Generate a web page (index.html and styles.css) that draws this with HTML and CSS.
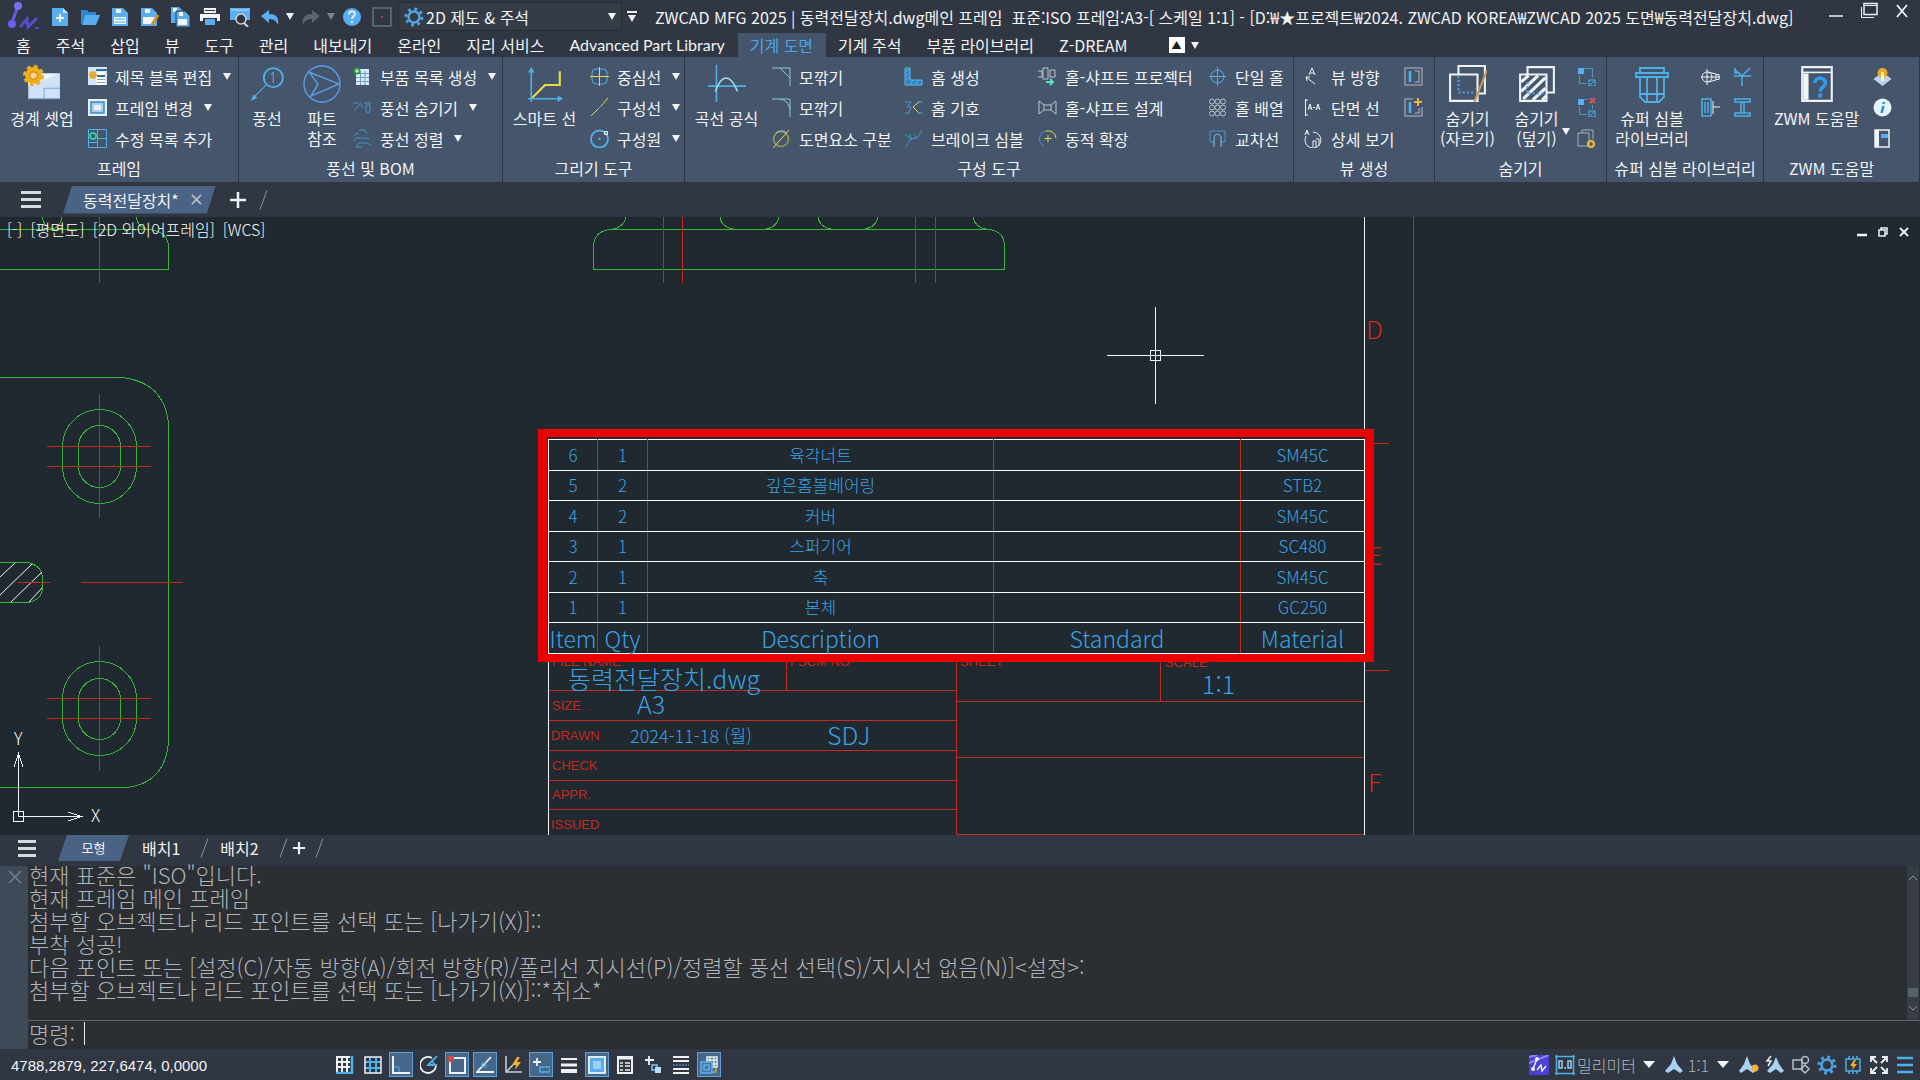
FILE: index.html
```html
<!DOCTYPE html>
<html lang="ko">
<head>
<meta charset="utf-8">
<title>ZWCAD MFG 2025</title>
<link rel="stylesheet" href="styles.css">
</head>
<body>
<div class="app">
<header class="titlebar">
  <svg class="logo" viewBox="0 0 32 30"><path d="M10 4 3 23" stroke="#6a5be6" stroke-width="3"/><circle cx="10" cy="4" r="4" fill="#7a6cf5"/><circle cx="4" cy="22" r="4" fill="#6d5cf0"/><path d="m12 25 7-8 1 8 9-9" stroke="#5a4cd0" stroke-width="3"/><path d="M27 26h4" stroke="#5a4cd0" stroke-width="2"/></svg>
  <div class="quick">
    <button aria-label="새로 만들기"><svg viewBox="0 0 20 20"><path class="fb" d="M2 1h11l5 5v13H2z"/><path fill="#bfe0fa" d="M13 1v5h5z"/><path class="w" stroke-width="2" d="M10 7v8M6 11h8"/></svg></button>
    <button aria-label="열기"><svg viewBox="0 0 20 20"><path fill="#2f86cc" d="M1 3h6l2 2h7v4H5L2 17H1z"/><path class="fb" d="M5 8h15l-4 10H2z"/></svg></button>
    <button aria-label="저장"><svg viewBox="0 0 20 20"><path class="fb" d="M2 1h11l5 5v13H2z"/><path class="fw" d="M4 10h12v7H4zM6 2h5v4H6z"/><path class="b" d="M5 12h10M5 15h10"/></svg></button>
    <button aria-label="다른 이름으로 저장"><svg viewBox="0 0 20 20"><path class="fb" d="M1 1h11l5 5v13H1z"/><path class="fw" d="M3 10h12v7H3zM5 2h5v4H5z"/><path stroke="#c98d2b" stroke-width="3" d="m18 8-6 10"/></svg></button>
    <button aria-label="모두 저장"><svg viewBox="0 0 20 20"><path class="fb" d="M1 0h8l4 4v12H1z"/><path class="fw" d="M3 1h4v4H3z"/><path fill="#58aef0" stroke="#30363f" d="M6 4h9l5 5v11H6z"/><path class="fw" d="M8 12h9v6H8zM9 5h4v4H9z"/></svg></button>
    <button aria-label="인쇄"><svg viewBox="0 0 20 20"><path class="fw" d="M4 1h12v5H4zM0 7h20v7h-3v-3H3v3H0z"/><path class="fb" d="M5 12h10v6H5z"/><path stroke="#30363f" d="M5 3.500h10"/></svg></button>
    <button aria-label="미리보기"><svg viewBox="0 0 20 20"><path class="fb" d="M0 1h20v12H0z"/><path stroke="#bfe0fa" d="M1 3h18"/><circle cx="11" cy="12" r="5" fill="#30363f" stroke="#cdd3d8" stroke-width="1.500"/><path stroke="#cdd3d8" stroke-width="2" d="m14 16 4 4"/></svg></button>
    <button aria-label="실행 취소"><svg viewBox="0 0 20 20"><path class="fb" d="M1 9 9 3v4c7 0 10 3 9 11-2-4-4-6-9-6v4z"/></svg></button>
    <button class="drop" aria-label="실행 취소 목록"><i class="caret"></i></button>
    <button aria-label="다시 실행"><svg viewBox="0 0 20 20"><path fill="#5d646c" d="m19 9-8-6v4C4 7 1 10 2 18c2-4 4-6 9-6v4z"/></svg></button>
    <button class="drop" aria-label="다시 실행 목록"><i class="caret dim"></i></button>
    <button aria-label="도움말"><svg viewBox="0 0 20 20"><circle class="fb" cx="10" cy="10" r="9"/><path class="w" stroke-width="1.800" d="M7 7.500c0-4 6-4 6-.5 0 2-3 2-3 5M10 14v2"/></svg></button>
    <button aria-label="터치"><svg viewBox="0 0 20 20"><path stroke="#6a7077" stroke-width="1.500" d="M1 1h18v18H1z"/><circle cx="10" cy="10" r="1" fill="#c0504d"/></svg></button>
  </div>
  <label class="workspace">
    <svg viewBox="0 0 20 20"><circle cx="10" cy="10" r="5.500" stroke="#4fa3e3" stroke-width="2.500"/><circle cx="10" cy="10" r="8" stroke="#4fa3e3" stroke-width="3" stroke-dasharray="2.800 3.480"/></svg>
    <select aria-label="작업공간"><option>2D 제도 &amp; 주석</option></select>
    <i class="caret"></i>
  </label>
  <button class="custom" aria-label="사용자화"><i class="bar"></i><i class="caret"></i></button>
  <h1>ZWCAD MFG 2025 | 동력전달장치.dwg메인 프레임&nbsp; 표준:ISO 프레임:A3-[ 스케일 1:1] - [D:₩★프로젝트₩2024. ZWCAD KOREA₩ZWCAD 2025 도면₩동력전달장치.dwg]</h1>
  <div class="winctl">
    <button aria-label="최소화"><svg viewBox="0 0 18 18"><path class="w" stroke-width="1.500" d="M2 14h14"/></svg></button>
    <button aria-label="최대화"><svg viewBox="0 0 18 18"><path class="w" stroke-width="1.500" d="M4 1.500h13v11H4z"/><path class="w" d="M4 3.500h13M1.500 5v10.500H14"/></svg></button>
    <button aria-label="닫기"><svg viewBox="0 0 18 18"><path class="w" stroke-width="1.800" d="m4 3 10 12M14 3 4 15"/></svg></button>
  </div>
</header>
<nav class="menu">
  <a href="#">홈</a><a href="#">주석</a><a href="#">삽입</a><a href="#">뷰</a><a href="#">도구</a><a href="#">관리</a><a href="#">내보내기</a><a href="#">온라인</a><a href="#">지리 서비스</a><a href="#" class="latin">Advanced Part Library</a><a href="#" class="on" aria-current="page">기계 도면</a><a href="#">기계 주석</a><a href="#">부품 라이브러리</a><a href="#">Z-DREAM</a>
  <button class="fold" aria-label="리본 최소화"><span>▲</span><i class="caret"></i></button>
</nav>
<section class="ribbon">
  <section class="panel p1">
    <div class="tools">
      <button class="big"><svg viewBox="0 0 36 36"><path fill="#cfe2fa" d="M5 8h30v24H5z"/><path fill="#eef5ff" d="M5 20 35 8H5z"/><path stroke="#7fa6d8" d="M35 22H20v10M5 32h30"/><circle cx="10" cy="10" r="8" fill="#f2ae1c"/><circle cx="10" cy="10" r="8.500" stroke="#f2ae1c" stroke-width="3" stroke-dasharray="3.500 3.180"/><circle cx="10" cy="10" r="3.500" fill="#f8d98a" stroke="#c8811a"/></svg><span>경계 셋업</span></button>
      <div class="rows">
        <button><svg viewBox="0 0 19 19"><path fill="#d3e7f7" d="M0 0h19v18H0z"/><path fill="#fff" d="M8 5h9v13H8z"/><path stroke="#2d6da8" stroke-width="2" d="M8 3h11M9 9h8"/><path stroke="#7ba3c4" d="M9 12.500h8M9 15.500h8"/><path stroke="#eba92a" stroke-width="2" d="M5 4v8M1 8h8M2 5l6 6M8 5l-6 6"/></svg><span>제목 블록 편집</span><i class="caret"></i></button>
        <button><svg viewBox="0 0 19 19"><path fill="#e6f3fb" d="M0 1h19v17H0z"/><path fill="#a9d2f1" stroke="#3c87c5" stroke-width="1.500" d="M3 4h13v11H3z"/><path fill="#e6f3fb" d="M6 7h7v5H6z"/></svg><span>프레임 변경</span><i class="caret"></i></button>
        <button><svg viewBox="0 0 19 19"><path class="b" d="M.5.500h18v18H.5zM9.500 1v18M10 9.500h9M1 13.500h8"/><circle cx="5" cy="7" r="3" stroke="#35c5a2" stroke-width="2"/></svg><span>수정 목록 추가</span></button>
      </div>
    </div>
    <h2>프레임</h2>
  </section>
  <section class="panel p2">
    <div class="tools">
      <button class="big"><svg viewBox="0 0 36 36"><circle class="b" cx="24" cy="12" r="9" stroke-width="1.800"/><path class="b" d="m22 9 2-2v10M17 19 4 32"/><path fill="#4fb0e8" d="m3 34 6-3-4-3z"/></svg><span>풍선</span></button>
      <button class="big"><svg viewBox="0 0 38 38"><circle cx="19" cy="19" r="18" stroke="#5a9be0" stroke-width="1.500"/><path stroke="#5a9be0" stroke-width="1.500" d="m6 7 30 12L8 31l7-12z"/></svg><span>파트<br>참조</span></button>
      <div class="rows">
        <button><svg viewBox="0 0 19 19"><path fill="#dceaf5" d="M3 2h13v16H3z"/><path stroke="#6f9fc9" d="M3 6.500h13M3 10.500h13M3 14.500h13M7.500 4v14M12 4v14"/><circle cx="4" cy="4" r="3.500" fill="#2c9a3c"/><path class="w" d="M4 2v4M2 4h4"/></svg><span>부품 목록 생성</span><i class="caret"></i></button>
        <button><svg viewBox="0 0 19 19"><path class="b dimi" d="M0 5h5M1 13l6-7M7 5l3 5M11 5h7M13 7h4v6l-2 2-2-2z"/></svg><span>풍선 숨기기</span><i class="caret"></i></button>
        <button><svg viewBox="0 0 19 19"><path class="b dimi" d="M6 1h6l2 4M1 6l5-2M3 9h9l4 1M3 9l-2 3M6 14h8l4 2M6 14l-3 4h6"/></svg><span>풍선 정렬</span><i class="caret"></i></button>
      </div>
    </div>
    <h2>풍선 및 BOM</h2>
  </section>
  <section class="panel p3">
    <div class="tools">
      <button class="big"><svg viewBox="0 0 36 36"><path class="b" stroke-width="1.500" d="M5 35V4M2 32h31"/><path class="fc" d="m5 2-3 5h6zM35 32l-5-3v6z"/><path class="y" stroke-width="2" d="M6 31 18 19h14V6"/></svg><span>스마트 선</span></button>
      <div class="rows">
        <button><svg viewBox="0 0 19 19"><rect class="b" x="2" y="2" width="15" height="15" rx="4"/><path class="y" d="M9.500 0v19M0 9.500h19"/></svg><span>중심선</span><i class="caret"></i></button>
        <button><svg viewBox="0 0 19 19"><path class="y" d="M1 18 8 11M11 8l7-8"/><path class="b" d="m8 11 3-3"/></svg><span>구성선</span><i class="caret"></i></button>
        <button><svg viewBox="0 0 19 19"><circle class="b" cx="9.500" cy="10" r="8.500" stroke-width="1.800"/><circle class="fc" cx="9.500" cy="10" r="1.200"/><path class="w" d="M14.500 2.500h3v3h-3z"/></svg><span>구성원</span><i class="caret"></i></button>
      </div>
    </div>
    <h2>그리기 도구</h2>
  </section>
  <section class="panel p4">
    <div class="tools">
      <button class="big"><svg viewBox="0 0 36 36"><path class="b" stroke-width="1.500" d="M8 0v35M0 20h36"/><path stroke="#9fe0e8" stroke-width="1.500" d="M7 25C13 8 21 8 28 25"/></svg><span>곡선 공식</span></button>
      <div class="rows">
        <button><svg viewBox="0 0 19 19"><path class="c" d="M0 1h18v18M8 1l10 10"/></svg><span>모깎기</span></button>
        <button><svg viewBox="0 0 19 19"><path class="c" d="M0 1h18v18M8 1q8 1 10 10"/></svg><span>모깎기</span></button>
        <button><svg viewBox="0 0 19 19"><circle cx="9" cy="10" r="7.500" stroke="#9aa04e" stroke-width="1.500"/><path class="c" d="M4 4a8 8 0 0 1 11 0"/><path class="y" d="M1 19 17 1"/></svg><span>도면요소 구분</span></button>
      </div>
      <div class="rows">
        <button><svg viewBox="0 0 19 19"><path fill="#3483bd" stroke="#5cb8ee" d="M1 1h5v12h12v5H1z"/><path class="b" d="m1 5 5-3M1 9l5-3M1 13l5-3M6 18l3-5M11 18l3-5"/></svg><span>홈 생성</span></button>
        <button><svg viewBox="0 0 19 19"><path class="b dimi" d="M1 4h6L3 9h4l-2 6H1"/><path class="y" d="m15 4-6 5 6 6"/><path class="b" d="M14 4h4M14 15h4"/></svg><span>홈 기호</span></button>
        <button><svg viewBox="0 0 19 19"><path class="b dimi" d="m1 5 6 5 6-1 5-8M6 5l1 5-5 8M13 9l-3-3"/></svg><span>브레이크 심볼</span></button>
      </div>
      <div class="rows">
        <button><svg viewBox="0 0 19 19"><path class="w dimi" d="M0 4h4v6H0M5 1h5v11H5zM12 3h5v7h-5z"/><path stroke="#5ce0bd" stroke-width="2" d="M8 15h7M12 12l3 3-3 3"/></svg><span>홀-샤프트 프로젝터</span></button>
        <button><svg viewBox="0 0 19 19"><path class="w dimi" d="M1 3v13M18 3v13M1 3l5 4h7l5-4M1 16l5-4h7l5 4M6 7v5M13 7v5"/></svg><span>홀-샤프트 설계</span></button>
        <button><svg viewBox="0 0 19 19"><path class="b dimi" d="M6 17a8 8 0 0 1 2-15"/><path class="y" d="M8 2a8 8 0 0 1 10 7M10 6v7M6.500 9.500h7"/></svg><span>동적 확장</span></button>
      </div>
      <div class="rows">
        <button><svg viewBox="0 0 19 19"><circle class="b" cx="9.500" cy="9.500" r="6.500"/><path class="b" d="M9.500 0v19M1 9.500h17"/></svg><span>단일 홀</span></button>
        <button><svg viewBox="0 0 19 19"><g class="w dimi"><circle cx="4" cy="3.500" r="2.500"/><circle cx="9.500" cy="3.500" r="2.500"/><circle cx="15" cy="3.500" r="2.500"/><circle cx="4" cy="9.500" r="2.500"/><circle cx="9.500" cy="9.500" r="2.500"/><circle cx="15" cy="9.500" r="2.500"/><circle cx="4" cy="15.500" r="2.500"/><circle cx="9.500" cy="15.500" r="2.500"/><circle cx="15" cy="15.500" r="2.500"/></g></svg><span>홀 배열</span></button>
        <button><svg viewBox="0 0 19 19"><path class="b dimi" d="M6 13H2V2h15v11h-4"/><path class="c" d="M6 18V9c0-5 7-5 7 0v9"/></svg><span>교차선</span></button>
      </div>
    </div>
    <h2>구성 도구</h2>
  </section>
  <section class="panel p5">
    <div class="tools">
      <div class="rows">
        <button><svg viewBox="0 0 19 19"><path class="w" d="m5 8 3-7 3 7M6 6h4M2 10l9 7M2 10l4 0M2 10l1 4"/></svg><span>뷰 방향</span></button>
        <button><svg viewBox="0 0 19 19"><path class="w" d="M1.500 1v17M1 2h3M1 17h3M4 12l2-6 2 6M4.500 10h3M12 12l2-6 2 6M12.500 10h3M9 9.500h2"/></svg><span>단면 선</span></button>
        <button><svg viewBox="0 0 19 19"><path class="w" d="M9 3a8 8 0 1 1-7 4M1 6l2-5 2 5M2 4h2M9 18v-6h3v6M12 10h3v7"/></svg><span>상세 보기</span></button>
      </div>
      <div class="rows">
        <button aria-label="뷰 상자"><svg viewBox="0 0 19 19"><path stroke="#8f99a5" stroke-width="1.500" d="M1 1h17v17H1zM11 4h4v11h-4"/><path class="b" stroke-width="2.500" d="M6 4v11"/></svg></button>
        <button aria-label="뷰 추가"><svg viewBox="0 0 19 19"><path stroke="#8f99a5" stroke-width="1.500" d="M9 1H1v17h17V9M11 15h4v-5"/><path class="b" stroke-width="2.500" d="M6 4v11"/><path stroke="#f2b13c" stroke-width="2" d="M14 0v8M10 4h8"/></svg></button>
      </div>
    </div>
    <h2>뷰 생성</h2>
  </section>
  <section class="panel p6">
    <div class="tools">
      <button class="big"><svg viewBox="0 0 36 36"><path class="w" stroke-width="2" d="M9 8V1h25v26h-7M1 9h26v25H1z"/><path stroke="#4fa3e3" stroke-width="2" stroke-dasharray="2 2" d="M9 10v16h16"/><path stroke="#c79a52" stroke-width="2" d="M36 5 24 35"/></svg><span>숨기기<br>(자르기)</span></button>
      <button class="big"><svg viewBox="0 0 36 36"><path class="w" stroke-width="2" d="M9 8V2h25v24h-7M2 9h25v25H2z"/><path class="w" stroke-width="3" d="m3 16 7-6M3 25l16-15M5 32 26 12M14 33l12-11M23 33l4-4"/><path stroke="#4fa3e3" stroke-width="2" stroke-dasharray="2 2" d="M9 16v11h17"/></svg><span>숨기기<br>(덮기)</span><i class="caret"></i></button>
      <div class="rows">
        <button aria-label="숨김 편집"><svg viewBox="0 0 19 19"><path class="fb" d="M1 1h6v6H1z"/><path class="b dimi" d="M7 1.500h8.500V11M2.500 8v8.500H10"/><path class="b" d="M12 13h6v6h-6zM12 19l6-6"/></svg></button>
        <button aria-label="숨김 삭제"><svg viewBox="0 0 19 19"><path class="fb" d="M1 1h6v6H1z"/><path class="b dimi" d="M7 1.500h4M15.500 7v4M2.500 8v8.500H10"/><path class="b" d="M12 13h6v6h-6zM12 19l6-6"/><path stroke="#d8555c" stroke-width="2" d="m13 0 5 5M18 0l-5 5"/></svg></button>
        <button aria-label="숨김 설정"><svg viewBox="0 0 19 19"><path stroke="#a6b0bb" d="M5 4V1h11v9M1 4h11v13H1z"/><circle cx="14" cy="15" r="3" stroke="#e5ac3f" stroke-width="2.500"/></svg></button>
      </div>
    </div>
    <h2>숨기기</h2>
  </section>
  <section class="panel p7">
    <div class="tools">
      <button class="big"><svg viewBox="0 0 36 38"><path class="b" stroke-width="1.800" d="M6 3h24v5H6zM2 8h32v4H2zM6 12v20l5 5h14l5-5V12M6 29h24M13 12v25M23 12v25"/></svg><span>슈퍼 심볼<br>라이브러리</span></button>
      <div class="rows">
        <button aria-label="볼트"><svg viewBox="0 0 19 19"><circle class="w" cx="6" cy="10" r="5"/><path class="w" d="m7 5 8 2v6l-8 2M15 7.500h3v5h-3M0 10h19"/><path class="w" d="M6 2v16"/></svg></button>
        <button aria-label="단면"><svg viewBox="0 0 19 19"><path class="b" stroke-width="1.500" d="M1 1h9v17H1zM4 4v11M7 4v11"/><path class="w" d="M12 3v13M12 9h7"/></svg></button>
      </div>
      <div class="rows">
        <button aria-label="용접"><svg viewBox="0 0 19 19"><path class="b" stroke-width="1.500" d="M9 19V9M9 9 1 2M9 9l8-8M1 9h17M2 1v5h5"/></svg></button>
        <button aria-label="형강"><svg viewBox="0 0 19 19"><path class="b" stroke-width="1.500" d="M2 1h15v3H2zM2 15h15v3H2zM8 4v11M11 4v11"/></svg></button>
      </div>
    </div>
    <h2>슈퍼 심볼 라이브러리</h2>
  </section>
  <section class="panel p8">
    <div class="tools">
      <button class="big"><svg viewBox="0 0 36 36"><path class="w" stroke-width="2" d="M4 2h28v32H4z"/><path class="w" stroke-width="1.500" d="M4 7h28"/><path class="fw" d="M5 8h5v25H5z"/><path stroke="#2f9de8" stroke-width="3.500" d="M16 17c0-6 10-6 10 0 0 4-5 4-5 8M21 27v4"/></svg><span>ZWM 도움말</span></button>
      <div class="rows">
        <button aria-label="팁"><svg viewBox="0 0 19 19"><path fill="#b9d6ee" d="m9.500 5 9 7-9 7-9-7z"/><circle cx="9.500" cy="6" r="5" fill="#f3a928"/><path fill="#fff3cf" d="M8 5h3v9H8z"/></svg></button>
        <button aria-label="정보"><svg viewBox="0 0 19 19"><circle cx="9.500" cy="9.500" r="9" fill="#e8f4fc"/><path stroke="#2b8fd0" stroke-width="2.500" d="m10.500 8-2 7M11 4l-.5 2"/></svg></button>
        <button aria-label="문서"><svg viewBox="0 0 19 19"><path class="w" stroke-width="1.500" d="M2 1h14v17H2z"/><path class="fw" d="M2 1h4v17H2z"/><path class="fb" d="M8 5h7v4H8z"/></svg></button>
      </div>
    </div>
    <h2>ZWM 도움말</h2>
  </section>
</section>
<nav class="doctabs">
  <button class="burger" aria-label="문서 목록"><i></i><i></i><i></i></button>
  <div class="doctab"><a href="#">동력전달장치*</a><button aria-label="탭 닫기"><svg viewBox="0 0 12 12"><path stroke="#b5bcc4" stroke-width="2" d="m1 1 10 10M11 1 1 11"/></svg></button></div>
  <button class="plus" aria-label="새 문서"><svg viewBox="0 0 16 16"><path class="w" stroke-width="2.500" d="M8 0v16M0 8h16"/></svg></button>
  <i class="slash"></i>
</nav>
<main class="canvas">
  <svg class="drawing" aria-label="도면">
    <g transform="translate(0 -217)">
      <g class="green">
        <path d="M0 229.500H145Q168.500 229.500 168.500 248V269.500H0M42 217q2 10 10 12 9-2 10-12M136 217q2 11 13 13"/>
        <path d="M593.500 269.500V246q1-15 17-16.500H988q16 1 16.500 16.500v23.500zM611 229.500q13-2 15-12.500M720 217q2 12 18 12.500h24q15-1 17-12.500M818 217q2 12 18 12.500h25q15-1 17-12.500M973 217q2 11 15 12.500"/>
        <path d="M0 377.500H122Q164 382 168.500 423V742Q165 783 127 787.500H0"/>
        <rect x="62.500" y="409.500" width="74" height="94" rx="37"/><rect x="78.500" y="425.500" width="42" height="62" rx="21"/>
        <rect x="62.500" y="661.500" width="74" height="94" rx="37"/><rect x="78.500" y="678.500" width="42" height="61" rx="21"/>
        <path d="M0 562.500H28Q42 566 42.500 578V588Q42 600 28 602.500H0"/>
      </g>
      <path class="white smooth" d="m0 577 15-14M0 595l32-31M11 602l31-30M29 602l13-14"/>
      <path class="red" d="M99.500 217v66M663.500 217v66M682.500 217v66M915.500 217v66M935.500 217v66M99.500 394v124M47 446.500h104M47 466.500h104M99.500 646v125M47 698.500h104M47 718.500h104M18 582.500h32M81 582.500h102"/>
      <path class="red" d="M1413.500 217v618M1374 443.500h15M1365 670.500h24M548 690.500h408M548 720.500h408M548 750.500h408M548 780.500h408M548 809.500h408M786.500 653v37M956.500 653v181.500H1364M956 701.500h408M956 757.500h408M1160.500 653v48"/>
      <path class="white" d="M548.500 653v182M1364.500 217v618"/>
      <path class="white" d="M1155.500 307v97M1107 355.500h97M1150.500 350.500h10v10h-10z"/>
      <path class="white" d="M13.500 811.500h10v10h-10zM18.500 816.500V755M18.500 816.500H80M14 767l4.500-13 4.500 13M68 812l13 4.500-13 4.500"/>
      <g class="ucs"><text x="14" y="745">Y</text><text x="91" y="822">X</text></g>
      <g class="zone"><text x="1366" y="339">D</text><text x="1368" y="565">E</text><text x="1368" y="792">F</text></g>
      <g class="caption"><text x="552" y="666">FILE NAME</text><text x="790" y="666">FSCM NO</text><text x="960" y="666">SHEET</text><text x="1165" y="667">SCALE</text><text x="552" y="710">SIZE</text><text x="551" y="740">DRAWN</text><text x="552" y="770">CHECK</text><text x="552" y="799">APPR.</text><text x="551" y="829">ISSUED</text></g>
      <g class="value"><text x="568" y="689">동력전달장치.dwg</text><text x="637" y="714">A3</text><text class="date" x="630" y="743">2024-11-18 (월)</text><text x="827" y="745">SDJ</text><text x="1202" y="694">1:1</text></g>
    </g>
  </svg>
  <div class="viewlabel"><button>[-]</button> <button>[평면도]</button> <button>[2D 와이어프레임]</button> <button>[WCS]</button></div>
  <div class="viewctl">
    <button aria-label="최소화"><svg viewBox="0 0 10 10"><path class="w" stroke-width="2.500" d="M0 8h10"/></svg></button>
    <button aria-label="이전 크기"><svg viewBox="0 0 10 10"><path class="w" stroke-width="1.500" d="M3 3V1h6v6H7M1 3h6v6H1z"/></svg></button>
    <button aria-label="닫기"><svg viewBox="0 0 10 10"><path class="w" stroke-width="2" d="m1 1 8 8M9 1 1 9"/></svg></button>
  </div>
  <div class="highlight">
    <table class="bom">
      <colgroup><col class="c-item"><col class="c-qty"><col class="c-desc"><col class="c-std"><col class="c-mat"></colgroup>
      <tbody>
        <tr><td>6</td><td>1</td><td>육각너트</td><td></td><td>SM45C</td></tr>
        <tr><td>5</td><td>2</td><td>깊은홈볼베어링</td><td></td><td>STB2</td></tr>
        <tr><td>4</td><td>2</td><td>커버</td><td></td><td>SM45C</td></tr>
        <tr><td>3</td><td>1</td><td>스퍼기어</td><td></td><td>SC480</td></tr>
        <tr><td>2</td><td>1</td><td>축</td><td></td><td>SM45C</td></tr>
        <tr><td>1</td><td>1</td><td>본체</td><td></td><td>GC250</td></tr>
      </tbody>
      <tfoot><tr><th scope="col">Item</th><th scope="col">Qty</th><th scope="col">Description</th><th scope="col">Standard</th><th scope="col">Material</th></tr></tfoot>
    </table>
  </div>
</main>
<nav class="layouts">
  <button class="burger" aria-label="배치 목록"><i></i><i></i><i></i></button>
  <a href="#" class="on" aria-current="page">모형</a>
  <a href="#">배치1</a><i class="slash"></i>
  <a href="#">배치2</a><i class="slash"></i>
  <button class="plus" aria-label="새 배치"><svg viewBox="0 0 16 16"><path class="w" stroke-width="2.500" d="M8 1v14M1 8h14"/></svg></button><i class="slash"></i>
</nav>
<section class="command">
  <div class="grip"><button aria-label="명령창 닫기"><svg viewBox="0 0 14 14"><path stroke="#77818b" stroke-width="1.500" d="m1 1 12 12M13 1 1 13"/></svg></button></div>
  <div class="cmdbody">
    <div class="history">
      <div class="log">
        <p>현재 표준은 "ISO"입니다.</p>
        <p>현재 프레임 메인 프레임</p>
        <p>첨부할 오브젝트나 리드 포인트를 선택 또는 [나가기(X)]::</p>
        <p>부착 성공!</p>
        <p>다음 포인트 또는 [설정(C)/자동 방향(A)/회전 방향(R)/폴리선 지시선(P)/정렬할 풍선 선택(S)/지시선 없음(N)]&lt;설정&gt;:</p>
        <p>첨부할 오브젝트나 리드 포인트를 선택 또는 [나가기(X)]::*취소*</p>
      </div>
      <div class="scroll"><svg viewBox="0 0 10 6"><path d="m1 5 4-4 4 4"/></svg><i></i><svg viewBox="0 0 10 6"><path d="m1 1 4 4 4-4"/></svg></div>
    </div>
    <div class="prompt"><label for="cmd">명령:</label><input id="cmd" type="text"></div>
  </div>
</section>
<footer class="status">
  <output class="coords">4788,2879, 227,6474, 0,0000</output>
  <div class="toggles">
    <button aria-label="그리드"><svg viewBox="0 0 18 18"><path class="w" stroke-width="2" d="M0 1h14M0 6h14M0 11h14M1 0v16M6 0v16M11 0v16"/><path class="b" stroke-width="2.500" d="M16 0v17H0"/></svg></button>
    <button aria-label="스냅"><svg viewBox="0 0 18 18"><path class="b" stroke-width="2" d="M1 6h16M1 12h16M6 1v16M12 1v16"/><path class="w" stroke-width="1.500" d="M1 1h16v16H1z"/></svg></button>
    <button class="set" aria-label="직교"><svg viewBox="0 0 18 18"><path class="w" stroke-width="2" d="M1 0v17h17"/><path class="b" d="M2 11h5v5"/></svg></button>
    <button aria-label="극좌표"><svg viewBox="0 0 18 18"><path class="w" stroke-width="1.800" d="M12 2a8 8 0 1 0 4 8"/><path class="b" stroke-width="1.800" d="m17 0-9 9h9M12 5l3 4"/></svg></button>
    <button class="set" aria-label="객체 스냅"><svg viewBox="0 0 18 18"><path class="w" stroke-width="2" d="M2 2h15v15H2z"/><path fill="#c0504d" d="M0 0h6v6H0z"/></svg></button>
    <button class="set" aria-label="객체 추적"><svg viewBox="0 0 18 18"><path class="w" stroke-width="1.800" d="M15 1 1 16h17"/><path class="b" d="M6 7h4v4H6z"/></svg></button>
    <button aria-label="동적 UCS"><svg viewBox="0 0 18 18"><path stroke="#cbd0d5" stroke-width="1.500" d="M2 0v16h16M2 16 9 9"/><path fill="#f0b030" d="M13 1 8 9h4l-1 5 6-8h-4l3-5z"/></svg></button>
    <button class="set" aria-label="동적 입력"><svg viewBox="0 0 18 18"><path class="w" stroke-width="1.800" d="M5 2v8M1 6h8"/><path class="b" stroke-width="1.500" d="M8 11h10v5H8z"/></svg></button>
    <button aria-label="선가중치"><svg viewBox="0 0 18 18"><path class="w" stroke-width="2" d="M1 3h16"/><path class="w" stroke-width="3" d="M1 9h16"/><path class="w" stroke-width="4" d="M1 15h16"/></svg></button>
    <button class="set" aria-label="투명도"><svg viewBox="0 0 18 18"><path fill="#5aacec" stroke="#dcecf8" stroke-width="2" d="M1 1h16v16H1z"/><path fill="#9dd0f7" d="M5 5h8v8H5z"/></svg></button>
    <button aria-label="빠른 특성"><svg viewBox="0 0 18 18"><path class="w" stroke-width="2" d="M2 1h14v16H2z"/><path class="w" stroke-width="3" d="M2 2h14"/><path class="w" stroke-width="1.500" d="M4 7h3M9 7h5M4 10h3M9 10h5M4 14h3M9 14h5"/></svg></button>
    <button aria-label="선택 순환"><svg viewBox="0 0 18 18"><path class="w" stroke-width="1.800" d="M5 0v9M1 4h9"/><path stroke="#7cc4fa" stroke-width="1.500" d="M8 9h5v5H8z"/><path fill="#b9dffb" d="M11 11h6v6h-6z"/></svg></button>
    <button aria-label="주석"><svg viewBox="0 0 18 18"><path class="w" stroke-width="2" d="M1 1h16M1 5h16M1 13h16M1 17h16"/><path class="b" stroke-dasharray="2 1" d="M1 9h16"/></svg></button>
    <button class="set" aria-label="모형 도면"><svg viewBox="0 0 18 18"><path class="w" stroke-width="1.500" d="M7 1h10v10H7zM10 1v10M14 1v10M7 4h10M7 8h10"/><path fill="#4d7396" stroke="#5db0f0" stroke-width="1.500" d="M1 6h11v11H1zM4 9h5v5H4z"/><path stroke="#d7a13a" stroke-width="1.500" d="M16 12v4h-3"/></svg></button>
  </div>
  <div class="tray">
    <button aria-label="ZWCAD"><svg viewBox="0 0 20 20"><path fill="#4b3fd6" d="M0 0h20v20H0z"/><path stroke="#8b86ff" stroke-width="2" d="M0 8 20 0M0 2l8-2"/><path class="w" stroke-width="1.500" d="m8 4-4 10M8 15l4-5 1 6 4-5"/><circle class="fw" cx="8" cy="4" r="2"/><circle class="fw" cx="4" cy="14" r="2"/></svg></button>
    <button class="unit"><svg viewBox="0 0 20 20"><path class="b" stroke-width="1.500" d="M0 1.500h20M0 18.500h20M1.500 0v20M18.500 0v20"/><path stroke="#9fcdf2" stroke-width="1.500" d="M4 6h3v7H4zM13 6h3v7h-3zM10 12v2"/></svg><span>밀리미터</span><i class="caret wide"></i></button>
    <button class="scale"><svg viewBox="0 0 20 20"><path class="pl" d="m10 1 3 8 6 7-3 2-6-4-6 4-3-2 6-7z"/></svg><span>1:1</span><i class="caret wide"></i></button>
    <button aria-label="주석 표시"><svg viewBox="0 0 20 20"><path class="pl" d="m8 1 3 8 6 7-3 2-6-4-6 4-2-2 5-7z"/><circle cx="16" cy="13" r="3.500" fill="#f3b13a"/></svg></button>
    <button aria-label="자동 축척"><svg viewBox="0 0 20 20"><path class="pl" d="m11 2 3 7 5 7-3 2-5-4-6 4-3-2 6-7z"/><path class="w" stroke-width="1.500" d="M6 1 2 6h4l-3 5"/></svg></button>
    <button aria-label="작업공간"><svg viewBox="0 0 20 20"><path stroke="#b8bec5" stroke-width="1.500" d="M2 5h9v9H2z"/><circle cx="14" cy="5" r="3.500" stroke="#b8bec5" stroke-width="1.500"/><path stroke="#b8bec5" stroke-width="1.500" d="m14 10 4 4-4 4-4-4z"/></svg></button>
    <button aria-label="설정"><svg viewBox="0 0 20 20"><circle cx="10" cy="10" r="5.500" stroke="#4fa3e3" stroke-width="2.500"/><circle cx="10" cy="10" r="8" stroke="#4fa3e3" stroke-width="3" stroke-dasharray="2.800 3.480"/></svg></button>
    <button aria-label="하드웨어"><svg viewBox="0 0 20 20"><path class="b" stroke-width="1.500" d="M3 4h14v12H3zM6 1v3M10 1v3M14 1v3M6 16v3M10 16v3M14 16v3"/><path fill="#f0b030" d="m11 5-4 6h3l-1 4 5-6h-3l2-4z"/></svg></button>
    <button aria-label="전체 화면"><svg viewBox="0 0 20 20"><path class="w" stroke-width="1.800" d="M2 7V2h5M13 2h5v5M18 13v5h-5M7 18H2v-5M2 2l6 6M18 2l-6 6M18 18l-6-6M2 18l6-6"/></svg></button>
    <button aria-label="사용자화"><svg viewBox="0 0 20 20"><path class="b" stroke-width="2.500" d="M2 3h16M2 10h16M2 17h16"/></svg></button>
  </div>
</footer>
</div>
</body>
</html>
```
FILE: styles.css
```css
:root {
  --bar: #303742;
  --ribbon: #44556c;
  --canvas: #202830;
  --blue: #4fb0e8;
  --line-red: #c22a20;
}
* { box-sizing: border-box; }
body {
  margin: 0;
  font: 16px/20px "Noto Sans CJK KR", sans-serif;
  color: #f2f4f6;
  background: var(--bar);
}
button, select, input { font: inherit; color: inherit; background: none; border: 0; padding: 0; }
button { display: flex; align-items: center; justify-content: center; white-space: nowrap; }
a { color: inherit; text-decoration: none; white-space: nowrap; }
svg { fill: none; display: block; flex: none; }
h1, h2, p { margin: 0; font-size: 16px; font-weight: 400; }
.w { stroke: #eef2f5; }
.b { stroke: var(--blue); }
.c { stroke: #86c8e0; }
.y { stroke: #e8dc4a; }
.fw { fill: #f2f5f7; }
.fb { fill: #58aef0; }
.fc { fill: var(--blue); }
.pl { fill: #a9d2f2; }
.dimi { opacity: .7; }

.caret {
  width: 0;
  border: 4px solid transparent;
  border-top: 7px solid #f2f4f6;
  border-bottom: 0;
  flex: none;
}
.caret.dim { border-top-color: #7b8289; }
.caret.wide { border-width: 7px 6px 0; }

.app { display: flex; flex-direction: column; height: 100vh; min-height: 800px; overflow: hidden; }

.titlebar { display: flex; align-items: center; height: 33px; flex: none; }
.logo { width: 32px; height: 30px; margin: 0 8px; }
.quick { display: flex; align-items: center; gap: 10px; padding-left: 2px; }
.quick svg { width: 20px; height: 20px; }
.quick .drop { width: 8px; margin: 0 -3px 0 -4px; }
.workspace {
  display: flex; align-items: center; gap: 2px;
  width: 224px; height: 29px; margin-left: 6px; padding: 0 5px;
  border: 1px solid #272d35; background: #353c46; flex: none;
}
.workspace svg { width: 20px; height: 20px; }
.workspace select { appearance: none; flex: 1; height: 24px; outline: 0; }
.custom { flex-direction: column; gap: 2px; width: 20px; }
.custom .bar { width: 10px; height: 2px; background: #f2f4f6; }
.titlebar h1 { flex: 1; min-width: 0; padding-left: 13px; line-height: 24px; white-space: nowrap; }
.winctl { display: flex; gap: 15px; padding-right: 9px; align-self: flex-start; padding-top: 2px; }
.winctl svg { width: 18px; height: 18px; }

.menu { display: flex; height: 24px; padding-left: 4px; flex: none; }
.menu a { padding: 0 13px 0 12px; line-height: 24px; }
.menu .latin { font-family: Lato, sans-serif; }
.menu .on { color: #4aa5e6; background: var(--ribbon); }
.fold { gap: 6px; margin-left: 28px; }
.fold span { width: 16px; height: 16px; line-height: 16px; background: #fff; color: #222; font-size: 10px; }

.ribbon {
  display: grid;
  grid-template-columns: 239fr 264fr 182fr 609fr 141fr 172fr 157fr 156fr;
  height: 125px; flex: none; background: var(--ribbon);
}
.panel { display: flex; flex-direction: column; padding-top: 4px; border-right: 1px solid #2c3746; min-width: 0; }
.panel h2 { text-align: center; line-height: 30px; white-space: nowrap; }
.tools { display: grid; height: 92px; }
.p1 .tools { grid-template-columns: 84px 1fr; }
.p2 .tools { grid-template-columns: 56px 54px 1fr; }
.p3 .tools { grid-template-columns: 83px 1fr; }
.p4 .tools { grid-template-columns: 83px 132px 134px 170px 1fr; }
.p5 .tools { grid-template-columns: 100px 1fr; padding-left: 6px; }
.p6 .tools { grid-template-columns: 65px 73px 1fr; }
.p7 .tools { grid-template-columns: 90px 32px 1fr; }
.p8 .tools { grid-template-columns: 105px 1fr; }
.p8 h2 { padding-right: 20px; }
.big { position: relative; flex-direction: column; justify-content: flex-start; gap: 5px; padding-top: 4px; }
.big svg { width: 38px; height: 38px; }
.big .caret { position: absolute; right: 3px; bottom: 19px; }
.rows { display: grid; grid-template-rows: repeat(3, 31px); padding-left: 4px; }
.rows button { justify-content: flex-start; gap: 8px; }
.rows svg { width: 19px; height: 19px; }
.rows .caret { margin-left: 3px; }

.doctabs { display: flex; align-items: center; height: 35px; padding: 0 21px; flex: none; }
.burger { flex-direction: column; gap: 4px; width: 20px; }
.burger i { width: 100%; height: 3px; background: #d5dade; }
.doctab {
  display: flex; align-items: center; gap: 12px;
  height: 28px; margin-left: 22px; padding: 0 14px 0 20px;
  background: #4a6284; clip-path: polygon(9px 0, 100% 0, calc(100% - 9px) 100%, 0 100%);
}
.doctab svg { width: 11px; height: 11px; }
.plus { margin-left: 14px; }
.plus svg { width: 16px; height: 16px; }
.slash { width: 1px; height: 20px; background: #8a929a; transform: rotate(20deg); }
.doctabs .slash { margin-left: 17px; }

.canvas { position: relative; flex: 1; min-height: 0; overflow: hidden; background: var(--canvas); }
.drawing { width: 100%; height: 100%; shape-rendering: crispEdges; }
.green { stroke: #35b53a; }
.red { stroke: var(--line-red); }
.white { stroke: #f4f6f6; }
.smooth { shape-rendering: auto; }
.drawing text { font-weight: 300; }
.ucs { fill: #fff; font-size: 17px; }
.zone { fill: #d02a20; font-size: 25px; }
.caption { fill: #c22a20; font: 13px "Liberation Sans", sans-serif; }
.value { fill: #3ba2e0; font-size: 25px; }
.drawing .date { font-size: 18px; }
.viewlabel { position: absolute; left: 7px; top: 2px; display: flex; gap: 8px; font-size: 16px; font-weight: 300; color: #fff; }
.viewctl { position: absolute; right: 11px; top: 10px; display: flex; gap: 11px; }
.viewctl svg { width: 10px; height: 10px; }
.highlight {
  position: absolute; left: 538px; top: 212px; width: 836px; height: 233px;
  padding: 2px 0 0 1px; background: var(--canvas);
  border: solid #e90000; border-width: 8px 9px;
}
.bom {
  width: 817px; height: 215px; table-layout: fixed; border-collapse: collapse;
  color: #3ba2e0; font-size: 17px; font-weight: 300; text-align: center;
}
.bom tr { height: 30px; }
.bom tfoot tr { height: 31px; }
.bom td, .bom th {
  padding: 0; line-height: 24px; font-weight: 300;
  border: 1px solid var(--line-red); border-top-color: #fff; border-bottom-color: #fff;
}
.bom th { font-size: 23px; }
.bom td:first-child, .bom th:first-child { border-left-color: #fff; }
.bom td:last-child, .bom th:last-child { border-right-color: #fff; }
.c-item { width: 49px; }
.c-qty { width: 50px; }
.c-desc { width: 346px; }
.c-std { width: 247px; }

.layouts { display: flex; align-items: center; height: 31px; padding: 0 18px 5px; flex: none; }
.layouts .burger { width: 18px; }
.layouts a { padding: 0 11px 0 13px; line-height: 26px; }
.layouts .on {
  width: 71px; margin-left: 22px; padding: 0; text-align: center;
  font-size: 13px; background: #4a6284; clip-path: polygon(9px 0, 100% 0, calc(100% - 9px) 100%, 0 100%);
}
.layouts .slash { margin: 0 2px 0 13px; }
.layouts .plus { margin-left: 6px; }
.layouts .plus svg { width: 14px; height: 14px; }

.command { display: flex; height: 183px; flex: none; background: #2b2f33; color: #aeb4b8; font-weight: 300; }
.grip { width: 28px; padding: 4px 8px; background: #3e4a57; }
.grip svg { width: 14px; height: 14px; }
.cmdbody { flex: 1; display: flex; flex-direction: column; min-width: 0; }
.history { display: flex; flex: none; justify-content: space-between; height: 155px; border-bottom: 1px solid #5b6468; }
.log { margin-top: -3px; padding-left: 1px; }
.log p { font-size: 22px; line-height: 23px; font-weight: 300; white-space: nowrap; }
.scroll { display: flex; flex-direction: column; align-items: center; width: 12px; margin-right: 1px; padding: 9px 0; background: #373d44; }
.scroll svg { width: 10px; height: 6px; stroke: #8c949b; }
.scroll i { width: 10px; height: 9px; margin: auto 0 8px; background: #56616e; }
.prompt { display: flex; height: 28px; padding: 1px 0 4px 1px; font-size: 22px; line-height: 23px; }
.prompt input { flex: 1; height: 23px; margin-left: 9px; border-left: 1px solid #e6e9eb; outline: 0; }

.status { display: flex; align-items: center; height: 31px; padding: 0 5px 0 11px; flex: none; font-weight: 300; }
.coords { width: 322px; padding-top: 3px; font: 15px/20px "Liberation Sans", sans-serif; }
.toggles { display: flex; gap: 4px; }
.toggles button { width: 24px; height: 25px; border: 1px solid transparent; }
.toggles .set { background: #44678a; border-color: #5f9fd6; }
.toggles svg { width: 18px; height: 18px; }
.tray { display: flex; align-items: center; gap: 6px; margin-left: auto; color: #aeb4b8; }
.tray svg { width: 20px; height: 20px; }
.tray .unit { gap: 2px; }
.tray .unit .caret { margin-left: 5px; }
.tray .scale { gap: 4px; margin-left: 3px; }
.tray .scale .caret { margin: 0 4px; }
```
